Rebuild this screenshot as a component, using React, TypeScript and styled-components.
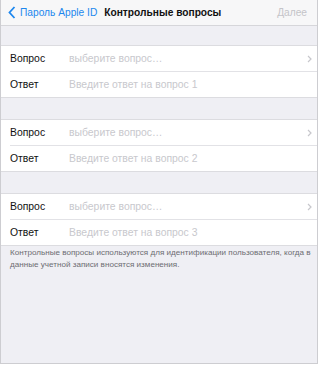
import React from "react";
import styled, { createGlobalStyle } from "styled-components";

const Global = createGlobalStyle`
  html, body { margin: 0; padding: 0; background: #ffffff; }
  body { font-family: "Liberation Sans", Arial, sans-serif; -webkit-font-smoothing: antialiased; }
`;

const Frame = styled.div`
  width: 316px;
  height: 363px;
  background: #efeff4;
  border-left: 1px solid #cdcdd1;
  border-right: 1px solid #cdcdd1;
  border-bottom: 1px solid #cdcdd1;
  display: flex;
  flex-direction: column;
  overflow: hidden;
`;

const NavBar = styled.div`
  height: 25px;
  background: #f7f7f8;
  border-bottom: 1px solid #d6d6da;
  display: flex;
  align-items: center;
  padding: 0 10px 0 7px;
  font-size: 10.2px;
`;

const Back = styled.div`
  display: flex;
  align-items: center;
  gap: 4px;
  color: #1d87ee;
`;

const Title = styled.div`
  margin-left: 7px;
  font-weight: 600;
  color: #111;
  flex: 1;
`;

const Next = styled.div`
  color: #c4c4c8;
`;

const Content = styled.div`
  display: flex;
  flex-direction: column;
  gap: 21px;
  padding-top: 19px;
`;

const Section = styled.div`
  background: #fff;
  border-top: 1px solid #dcdce0;
  border-bottom: 1px solid #dcdce0;
`;

const Row = styled.div<{ $last?: boolean }>`
  height: 25px;
  display: flex;
  align-items: center;
  margin-left: 9px;
  padding-right: 5px;
  border-bottom: ${(p) => (p.$last ? "none" : "1px solid #e2e2e6")};
  font-size: 10.4px;
`;

const Label = styled.div`
  width: 59px;
  color: #111;
`;

const Placeholder = styled.div`
  flex: 1;
  color: #c8c8cd;
`;

const Footer = styled.div`
  margin-top: -20px;
  padding: 0 6px 0 9px;
  font-size: 8.1px;
  line-height: 12px;
  color: #6d6d72;
`;

const Chevron = () => (
  <svg width="5" height="8" viewBox="0 0 5 8">
    <path d="M1 1 L4 4 L1 7" fill="none" stroke="#c7c7cc" strokeWidth="1.2" />
  </svg>
);

const BackChevron = () => (
  <svg width="8" height="13" viewBox="0 0 8 13">
    <path d="M6.5 1 L1.5 6.5 L6.5 12" fill="none" stroke="#1d87ee" strokeWidth="1.8" />
  </svg>
);

export default function App() {
  const items = [1, 2, 3];
  return (
    <>
      <Global />
      <Frame>
        <NavBar>
          <Back>
            <BackChevron />
            <span>Пароль Apple ID</span>
          </Back>
          <Title>Контрольные вопросы</Title>
          <Next>Далее</Next>
        </NavBar>
        <Content>
          {items.map((n) => (
            <Section key={n}>
              <Row>
                <Label>Вопрос</Label>
                <Placeholder>выберите вопрос…</Placeholder>
                <Chevron />
              </Row>
              <Row $last>
                <Label>Ответ</Label>
                <Placeholder>Введите ответ на вопрос {n}</Placeholder>
              </Row>
            </Section>
          ))}
          <Footer>
            Контрольные вопросы используются для идентификации пользователя, когда в данные учетной записи вносятся изменения.
          </Footer>
        </Content>
      </Frame>
    </>
  );
}
